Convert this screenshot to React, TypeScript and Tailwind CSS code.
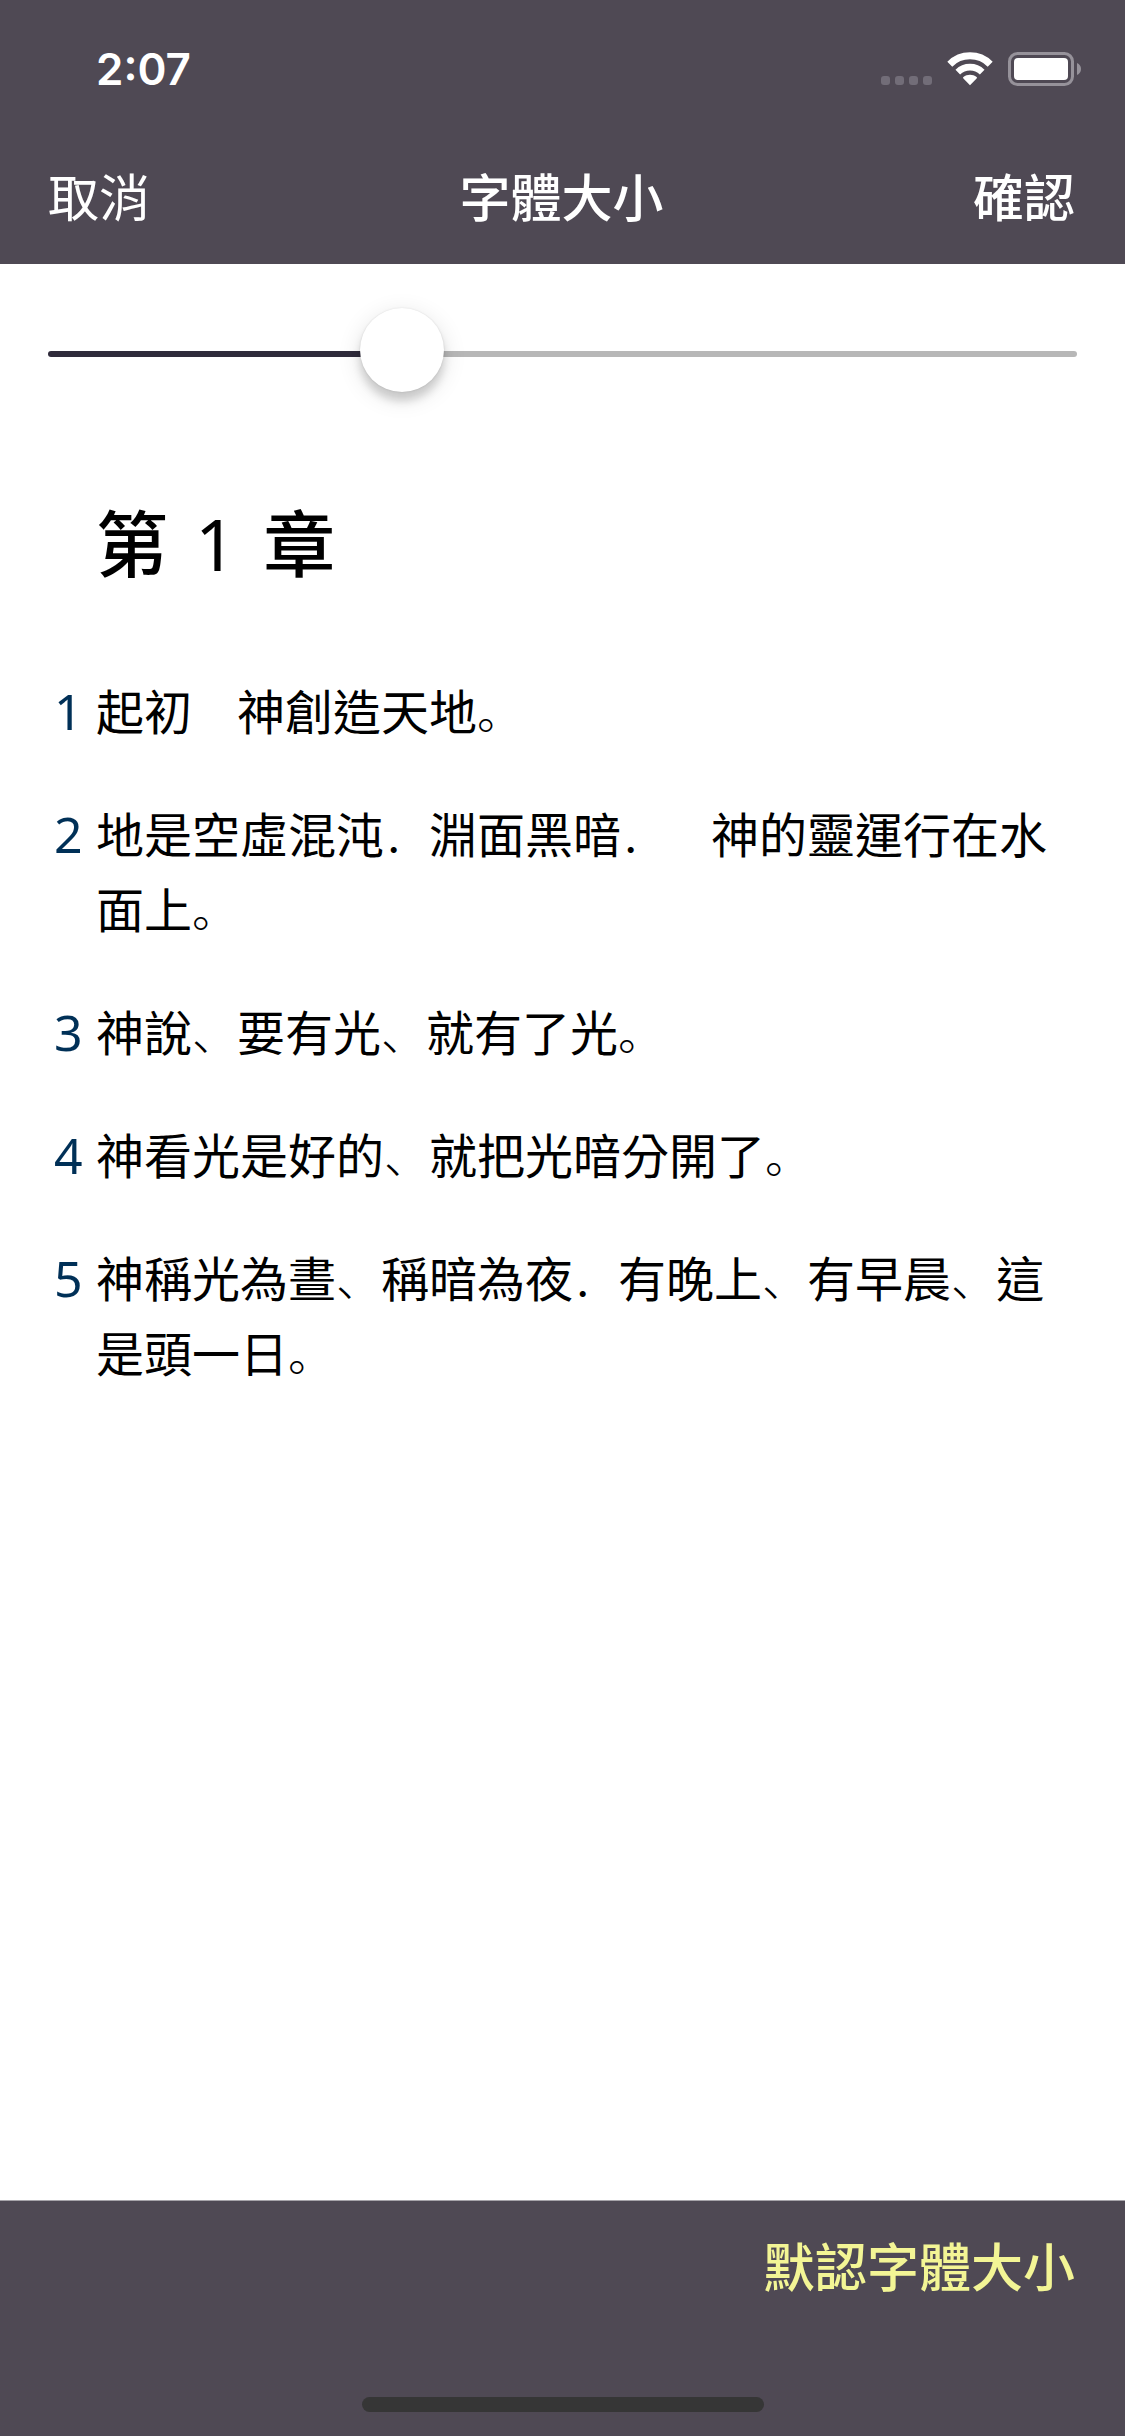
import { useState } from "react"

const DEFAULT_SIZE = 33

const verses = [
  { id: 1, text: "起初　神創造天地。" },
  { id: 2, text: "地是空虛混沌．淵面黑暗．　神的靈運行在水面上。" },
  { id: 3, text: "神說、要有光、就有了光。" },
  { id: 4, text: "神看光是好的、就把光暗分開了。" },
  { id: 5, text: "神稱光為晝、稱暗為夜．有晚上、有早晨、這是頭一日。" },
]

function SignalDots() {
  return (
    <svg width="51" height="34" viewBox="0 0 51 34" fill="#726D78" aria-hidden="true">
      {[0, 14, 28, 42].map((x) => (
        <rect key={x} x={x} y="24" width="9" height="9" rx="3" />
      ))}
    </svg>
  )
}

function WifiIcon() {
  return (
    <svg width="46" height="34" viewBox="0 0 46 34" fill="none" aria-hidden="true">
      <path d="M2.8 12.2a28.6 28.6 0 0 1 40.4 0" stroke="#fff" strokeWidth="7" />
      <path d="M10.8 20.2a17.3 17.3 0 0 1 24.4 0" stroke="#fff" strokeWidth="6.6" />
      <path d="M23 33.2l-6.6-6.6a1 1 0 0 1 0-1.5c3.8-3 9.4-3 13.2 0a1 1 0 0 1 0 1.5z" fill="#fff" />
    </svg>
  )
}

function BatteryIcon() {
  return (
    <svg width="73" height="34" viewBox="0 0 73 34" fill="none" aria-hidden="true">
      <rect x="1.5" y="1.5" width="63" height="31" rx="8" stroke="#96929A" strokeWidth="3" />
      <rect x="6" y="6" width="54" height="22" rx="4" fill="#fff" />
      <path d="M69 11c2.6 1 4 3.4 4 6s-1.4 5-4 6z" fill="#96929A" />
    </svg>
  )
}

// Full-width punctuation sits in the lower left corner and is a little narrower than the characters
function VerseText({ text }: { text: string }) {
  return (
    <p className="text-5xl leading-[75px] [text-spacing-trim:space-all]">
      {text.split(/([　。、．]+)/).map((part, index) =>
        index % 2 === 1 ? (
          <span
            key={index}
            lang="zh-Hans"
            className="font-['Noto_Sans_CJK_SC',sans-serif] text-[45px] leading-none font-light"
          >
            {part}
          </span>
        ) : (
          <span key={index}>{part}</span>
        ),
      )}
    </p>
  )
}

export default function App() {
  const [size, setSize] = useState(DEFAULT_SIZE)

  return (
    <div
      lang="zh-Hant"
      className="flex min-h-screen flex-col bg-white font-['Noto_Sans_CJK_TC',sans-serif] text-black"
    >
      <header className="bg-[#4F4954] text-white">
        <div className="flex h-[132px] items-center justify-between pt-1.5 pr-11 pl-24">
          <time className="font-['Inter',sans-serif] text-[44px] font-semibold">2:07</time>
          <div className="flex items-center gap-[15px]">
            <SignalDots />
            <WifiIcon />
            <BatteryIcon />
          </div>
        </div>
        <nav className="grid h-[132px] grid-cols-[1fr_auto_1fr] items-center pr-[50px] pb-1.5 pl-12 text-[51px]">
          <button type="button" className="justify-self-start">
            取消
          </button>
          <h1 className="font-medium">字體大小</h1>
          <button type="button" className="justify-self-end font-medium">
            確認
          </button>
        </nav>
      </header>

      <main className="flex-1 px-12 pt-11">
        <input
          type="range"
          aria-label="字體大小"
          min={0}
          max={100}
          value={size}
          onChange={(e) => setSize(Number(e.target.value))}
          style={{ backgroundImage: `linear-gradient(to right, #2F2B3B ${size}%, #B7B7B7 ${size}%)` }}
          className="my-[43px] block h-[6px] w-full cursor-pointer appearance-none rounded-full [&::-webkit-slider-runnable-track]:h-[6px] [&::-webkit-slider-thumb]:-mt-[43px] [&::-webkit-slider-thumb]:size-[84px] [&::-webkit-slider-thumb]:appearance-none [&::-webkit-slider-thumb]:rounded-full [&::-webkit-slider-thumb]:bg-white [&::-webkit-slider-thumb]:shadow-[0_0_2px_rgba(0,0,0,0.12),0_9px_9px_rgba(0,0,0,0.15),0_6px_24px_rgba(0,0,0,0.12)]"
        />

        <h2 className="mt-[147px] flex items-baseline gap-[27px] pl-12 text-7xl font-medium">
          <span>第</span>
          <span className="font-['Noto_Sans',sans-serif] font-normal">1</span>
          <span>章</span>
        </h2>

        <ol className="mt-[93px] flex flex-col gap-12">
          {verses.map((verse) => (
            <li key={verse.id} className="grid grid-cols-[48px_1fr] items-baseline">
              <span className="pl-[6px] font-['Noto_Sans',sans-serif] text-[50px] leading-none text-[#003057]">
                {verse.id}
              </span>
              <VerseText text={verse.text} />
            </li>
          ))}
        </ol>
      </main>

      <footer className="border-t border-[#A7A4AA] bg-[#4F4954] pb-6">
        <div className="flex h-[132px] items-center justify-end pr-[50px] pb-1">
          <button
            type="button"
            onClick={() => setSize(DEFAULT_SIZE)}
            className="text-[52px] font-medium text-[#F3F595]"
          >
            默認字體大小
          </button>
        </div>
        <div className="mx-auto mt-16 h-[15px] w-[402px] rounded-full bg-[#363636]" />
      </footer>
    </div>
  )
}
